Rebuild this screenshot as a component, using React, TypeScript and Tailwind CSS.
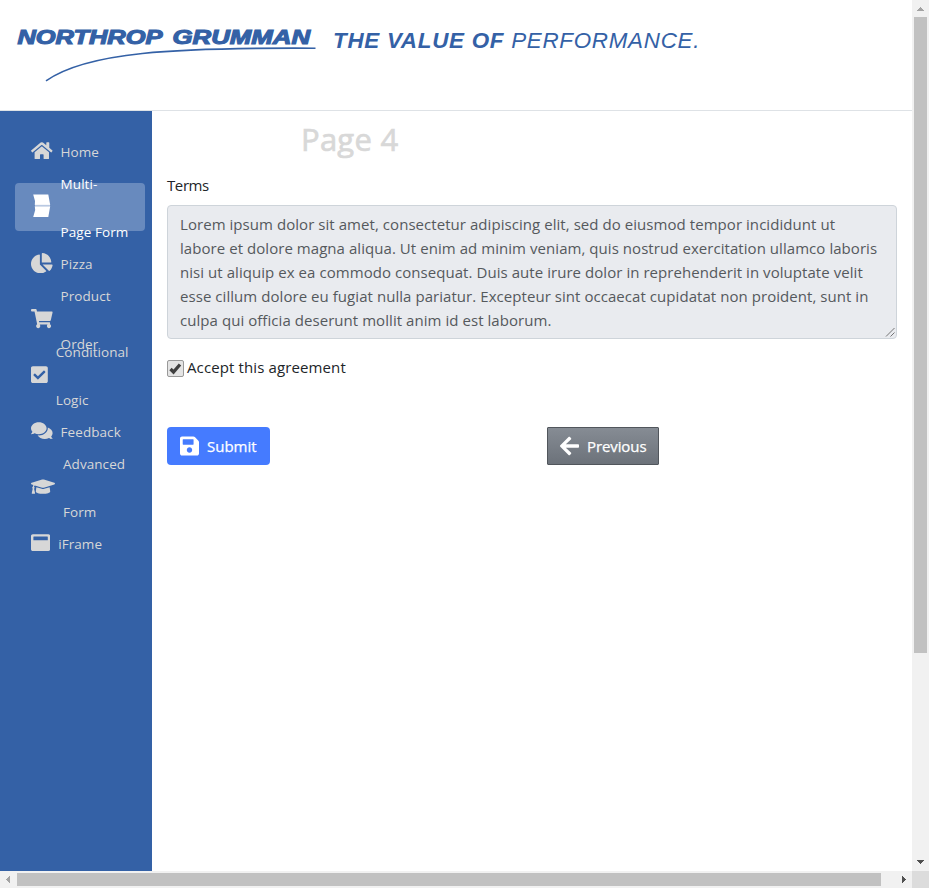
import type { ReactNode } from "react";
import {
  FaArrowLeft,
  FaChartPie,
  FaCheckSquare,
  FaComments,
  FaGraduationCap,
  FaHome,
  FaSave,
  FaShoppingCart,
  FaWindowMaximize,
} from "react-icons/fa";

function FoldedSheet() {
  return (
    <svg width="22" height="24" viewBox="0 0 22 24" fill="currentColor" className="mb-[3px]">
      <path d="M2.200 0.600H17.300L19.200 10.900H3.800L4 7z" />
      <path d="M3.800 12.200H19.200L17.300 23H2.200L4.200 16z" />
      <path d="M4 11.500H19" stroke="#b9c9e2" strokeWidth="1.300" />
    </svg>
  );
}

function NavItem({ icon, lines, active = false, width }: { icon: ReactNode; lines: string[]; active?: boolean; width: string }) {
  return (
    <a className={`flex h-12 w-[130px] shrink-0 items-center gap-2 rounded pl-4 ${active ? "bg-[#688abe] text-white" : "text-[#d7d7d7]"}`}>
      <span className={`${width} shrink-0`}>{icon}</span>
      <span className="pt-0.5 text-[13.5px] leading-[48px] tracking-[0.06px] whitespace-nowrap">
        {lines.map((line) => (
          <span key={line} className="block">{line}</span>
        ))}
      </span>
    </a>
  );
}

function Logo() {
  return (
    <svg width="304" height="64" viewBox="0 0 304 64" className="shrink-0" fill="#3461a6">
      <text x="5.400" y="22.600" textLength="145" lengthAdjust="spacingAndGlyphs" fontSize="19.5" stroke="#3461a6" strokeWidth="1.1" className="font-['Liberation_Sans',sans-serif] font-bold italic">NORTHROP</text>
      <text x="160.500" y="22.600" textLength="137.500" lengthAdjust="spacingAndGlyphs" fontSize="19.5" stroke="#3461a6" strokeWidth="1.1" className="font-['Liberation_Sans',sans-serif] font-bold italic">GRUMMAN</text>
      <path d="M34 59.800C75 31 160 26.500 303.500 27.200" fill="none" stroke="#3461a6" strokeWidth="1.6" />
    </svg>
  );
}

const terms = [
  "Lorem ipsum dolor sit amet, consectetur adipiscing elit, sed do eiusmod tempor incididunt ut",
  "labore et dolore magna aliqua. Ut enim ad minim veniam, quis nostrud exercitation ullamco laboris",
  "nisi ut aliquip ex ea commodo consequat. Duis aute irure dolor in reprehenderit in voluptate velit",
  "esse cillum dolore eu fugiat nulla pariatur. Excepteur sint occaecat cupidatat non proident, sunt in",
  "culpa qui officia deserunt mollit anim id est laborum.",
];

export default function App() {
  return (
    <div className="grid h-[888px] w-[929px] grid-cols-[912px_17px] grid-rows-[871px_17px] overflow-hidden bg-white font-['Open_Sans',sans-serif] text-[#212529]">
      <div className="flex flex-col">
        <header className="flex h-[111px] shrink-0 items-start border-b border-[#dee2e6] pt-[21px] pl-3">
          <Logo />
          <div className="pt-[6px] pl-[17px] font-['Liberation_Sans',sans-serif] text-[22.4px] leading-7 tracking-[0.72px] whitespace-nowrap text-[#3461a6] italic">
            <b>THE VALUE OF</b> PERFORMANCE.
          </div>
        </header>
        <div className="flex flex-1">
          <nav className="flex w-[152px] flex-col gap-2 bg-[#3461a6] pt-4 pl-[15px]">
            <NavItem width="w-[21.6px]" icon={<FaHome className="h-[19.2px] w-[21.6px]" />} lines={["Home"]} />
            <NavItem width="w-[21.6px]" icon={<FoldedSheet />} lines={["Multi-", "Page Form"]} active />
            <NavItem width="w-[21.6px]" icon={<FaChartPie className="h-[20.4px] w-[21.6px]" />} lines={["Pizza"]} />
            <NavItem width="w-[21.6px]" icon={<FaShoppingCart className="h-[19.2px] w-[21.6px]" />} lines={["Product", "Order"]} />
            <NavItem width="w-[16.8px]" icon={<FaCheckSquare className="h-[19.2px] w-[16.8px]" />} lines={["Conditional", "Logic"]} />
            <NavItem width="w-[21.6px]" icon={<FaComments className="h-[19.2px] w-[21.6px]" />} lines={["Feedback"]} />
            <NavItem width="w-6" icon={<FaGraduationCap className="h-[19.2px] w-6" />} lines={["Advanced", "Form"]} />
            <NavItem width="w-[19.2px]" icon={<FaWindowMaximize className="h-[19.2px] w-[19.2px]" />} lines={["iFrame"]} />
          </nav>
          <main className="flex flex-1 flex-col px-[15px]">
            <h1 className="mt-[9px] pl-[134px] text-[31px] leading-[38px] tracking-[0.25px] text-[#d8d8d8] [-webkit-text-stroke:0.7px_#d8d8d8]">Page 4</h1>
            <label className="mt-[15px] text-[15px] leading-6 tracking-[-0.4px]">Terms</label>
            <div className="relative mt-2 h-[134px] rounded border border-[#ced4da] bg-[#e9ebef] px-3 py-[6px] text-[15px] leading-6 tracking-[0.055px] whitespace-nowrap text-[#55595d]">
              {terms.map((line) => (
                <div key={line}>{line}</div>
              ))}
              <svg className="absolute right-0 bottom-0" width="11" height="11" viewBox="0 0 11 11" stroke="#555" strokeWidth="0.8">
                <path d="M1 9.500L9.500 1M5.500 9.500L9.500 5.500" />
              </svg>
            </div>
            <label className="mt-4 flex h-6 items-center gap-[3px] text-[15px] leading-6 tracking-[0.12px]">
              <svg width="17" height="17" viewBox="0 0 17 17" className="mt-0.5">
                <rect x="0.5" y="0.5" width="16" height="16" rx="1.5" fill="#e4e4e4" stroke="#999" />
                <path d="M3.500 9L6.500 12L13 4.500" fill="none" stroke="#404040" strokeWidth="3.3" />
              </svg>
              Accept this agreement
            </label>
            <div className="mt-12 grid grid-cols-[380px_1fr] text-[15px] text-white [-webkit-text-stroke:0.25px_white]">
              <button className="flex h-[38px] w-[103px] items-center gap-2 rounded bg-[#457bff] pl-[13px]">
                <FaSave className="h-[22px] w-[19px] shrink-0" />
                <span>Submit</span>
              </button>
              <button className="flex h-[38px] w-[112px] items-center gap-2 rounded-[1px] border border-[#51565c] bg-linear-to-b from-[#868c94] to-[#6c727a] pl-3">
                <FaArrowLeft className="h-[22px] w-[19px] shrink-0" />
                <span className="tracking-[-0.1px]">Previous</span>
              </button>
            </div>
          </main>
        </div>
      </div>
      <div className="flex flex-col items-center justify-between bg-[#f1f1f1]">
        <svg width="17" height="17" fill="#a3a3a3" shapeRendering="crispEdges"><path d="M5 11L8.500 7L12 11z" /></svg>
        <div className="h-[636px] w-[13px] bg-[#c1c1c1]" />
        <div className="flex-1" />
        <svg width="17" height="17" fill="#505050" shapeRendering="crispEdges"><path d="M5 6L8.500 10L12 6z" /></svg>
      </div>
      <div className="flex items-center bg-[#f1f1f1]">
        <svg width="17" height="17" fill="#a3a3a3" shapeRendering="crispEdges"><path d="M10 5L6 8.500L10 12z" /></svg>
        <div className="h-[13px] w-[864px] bg-[#c1c1c1]" />
        <div className="flex-1" />
        <svg width="17" height="17" fill="#505050" shapeRendering="crispEdges"><path d="M7 5L11 8.500L7 12z" /></svg>
      </div>
      <div className="bg-[#dcdcdc]" />
    </div>
  );
}
